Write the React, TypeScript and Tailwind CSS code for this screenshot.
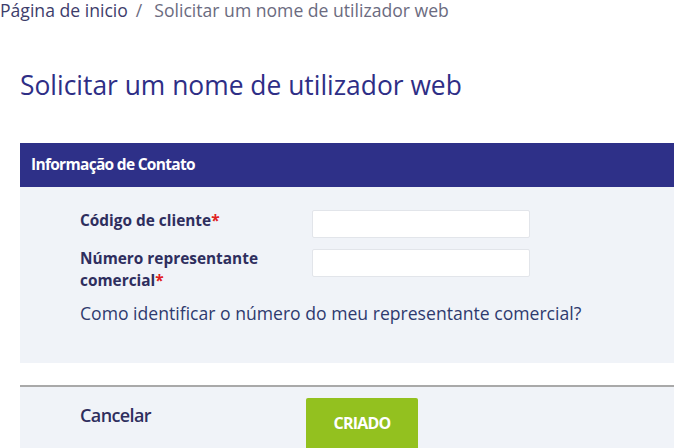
export default function App() {
  return (
    <div className="w-[674px] h-[448px] overflow-hidden bg-white font-['Open_Sans',sans-serif]">
      <nav className="flex items-center h-[20px] text-[17.6px] leading-[20px] text-[#6b6b80]">
        <span className="text-[#3d3d6b]">Página de inicio</span>
        <span className="ml-[8px]">/</span>
        <span className="ml-[12px]">Solicitar um nome de utilizador web</span>
      </nav>

      <h1 className="mt-[49px] ml-[20px] text-[26.4px] leading-[32px] text-[#2e2e86]">
        Solicitar um nome de utilizador web
      </h1>

      <section className="mt-[42px] ml-[20px]">
        <div className="h-[44px] flex items-center px-[11px] bg-[#2e3088]">
          <h2 className="text-white text-[15.5px] font-bold tracking-[-0.7px]">Informação de Contato</h2>
        </div>
        <div className="h-[176px] bg-[#f0f3f8] pt-[22px] pl-[60px]">
          <div className="flex">
            <label className="w-[232px] pt-[1px] text-[15.4px] leading-[22px] font-bold text-[#2e2e5e]">
              Código de cliente<span className="text-[#e02020]">*</span>
            </label>
            <input className="w-[218px] h-[28px] mt-[1px] bg-white border border-[#e2e5ea] rounded-[2px]" />
          </div>
          <div className="flex mt-[10px]">
            <label className="w-[232px] text-[15.4px] leading-[22px] font-bold text-[#2e2e5e]">
              Número representante
              <br />
              comercial<span className="text-[#e02020]">*</span>
            </label>
            <input className="w-[218px] h-[28px] mt-[1px] bg-white border border-[#e2e5ea] rounded-[2px]" />
          </div>
          <a className="block mt-[8px] text-[17.6px] leading-[26px] text-[#2e3a6e]">
            Como identificar o número do meu representante comercial?
          </a>
        </div>

        <div className="mt-[22px] border-t-2 border-[#a9a9a9] bg-[#f0f3f8] h-[70px] flex items-start pl-[60px]">
          <button className="mt-[15px] w-[226px] text-left text-[18px] font-semibold tracking-[-0.6px] text-[#2e2e5e]">
            Cancelar
          </button>
          <button className="mt-[11px] w-[112px] h-[60px] pb-[10px] rounded-[2px] bg-[#93c11f] text-white text-[16px] font-bold tracking-[-0.8px]">
            CRIADO
          </button>
        </div>
      </section>
    </div>
  )
}
